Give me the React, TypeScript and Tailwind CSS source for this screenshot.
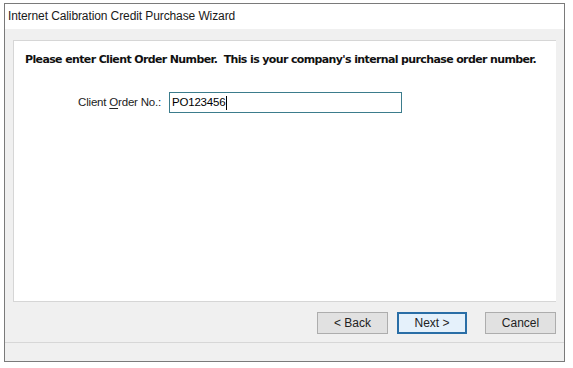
import React from "react";

export default function App() {
  return (
    <div className="w-[573px] h-[368px] bg-white pl-[4px] pt-[3px] font-['Liberation_Sans',sans-serif] text-[12px] text-black">
      <div className="w-[561px] h-[359px] border border-[#7a7a7a] bg-[#f0f0f0] flex flex-col">
        <div className="h-[25px] bg-white flex items-center pl-[3px] pb-[1px] text-[12px] leading-none tracking-[-0.1px] text-[#1a1a1a]">
          Internet Calibration Credit Purchase Wizard
        </div>
        <div className="flex-1 flex flex-col px-[8px] pt-[11px]">
          <div className="h-[262px] bg-white border-l border-t border-b border-[#d6d6d6] flex flex-col">
            <div className="pl-[11px] pt-[12px] whitespace-nowrap font-['DejaVu_Sans',sans-serif] font-bold text-[11px] leading-[14px] tracking-[-0.63px] text-[#111]">
              Please enter Client Order Number.&nbsp; This is your company&apos;s internal purchase order number.
            </div>
            <div className="flex items-center mt-[25px]">
              <div className="w-[155px] text-right pr-[8px] text-[11.5px] leading-none tracking-[-0.2px] text-[#222]">
                Client <span className="underline underline-offset-2">O</span>rder No.:
              </div>
              <div className="w-[233px] h-[21px] border border-[#3b7c8c] bg-white flex items-center pl-[2px] text-[11.5px] leading-none tracking-[-0.2px]">
                PO123456<span className="inline-block w-px h-[14px] bg-black ml-px" />
              </div>
            </div>
          </div>
          <div className="flex justify-end items-center h-[40px] pt-[1px] gap-[9px]">
            <button className="w-[71px] h-[22px] bg-[#e1e1e1] border border-[#adadad] text-[12px] leading-none text-[#222]">&lt; Back</button>
            <button className="w-[70px] h-[22px] bg-[#e5f1fb] border-2 border-[#2a6ea6] text-[12px] leading-none text-[#222]">Next &gt;</button>
            <button className="ml-[9px] w-[71px] h-[22px] bg-[#e1e1e1] border border-[#adadad] text-[12px] leading-none text-[#222]">Cancel</button>
          </div>
          <div className="h-px bg-[#d7d7d7] -mx-[8px]" />
          <div className="flex-1" />
        </div>
      </div>
    </div>
  );
}
